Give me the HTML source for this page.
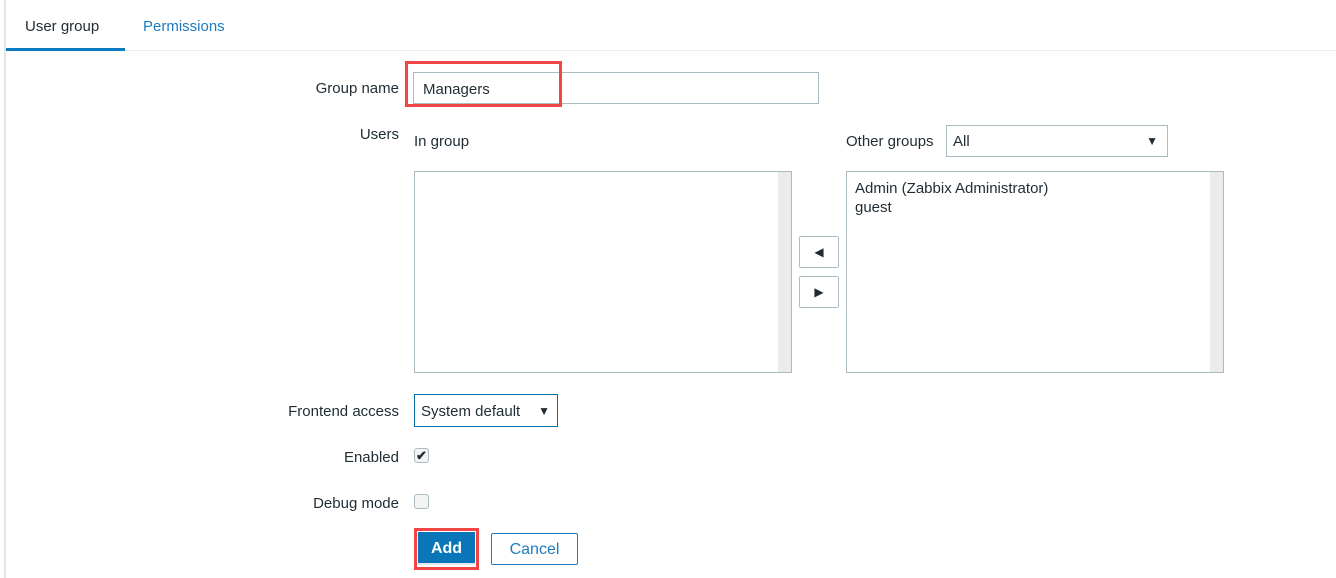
<!DOCTYPE html>
<html><head><style>
body{margin:0;width:1336px;height:578px;background:#fff;font-family:"Liberation Sans",Arial,sans-serif;font-size:15px;color:#1f2c33;position:relative;overflow:hidden}
.a{position:absolute}
.lbl{position:absolute;right:937px;text-align:right;white-space:nowrap}
.box{position:absolute;border:1px solid #acbbc2;background:#fff;box-sizing:border-box}
.sb{position:absolute;top:0;right:0;width:13px;bottom:0;background:#ebebeb}
.btn{position:absolute;border:1px solid #acbbc2;border-radius:2px;background:#fff;box-sizing:border-box;font-size:12px;text-align:center;line-height:30px}
.cb{position:absolute;width:15px;height:15px;border:1px solid #acbbc2;border-radius:3px;background:#f4f4f4;box-sizing:border-box}
</style></head><body>
<div class="a" style="left:4px;top:0;width:2px;height:578px;background:#e4e4e4"></div>
<div class="a" style="left:6px;top:50px;width:1330px;height:1px;background:#ebeef0"></div>
<div class="a" style="left:6px;top:48px;width:119px;height:3px;background:#0a7bc1"></div>
<div class="a" style="left:25px;top:18px">User group</div>
<div class="a" style="left:143px;top:18px;color:#1f7bbf">Permissions</div>

<div class="lbl" style="top:80px">Group name</div>
<div class="box" style="left:413px;top:72px;width:406px;height:32px;padding:8px 9px">Managers</div>
<div class="a" style="left:405px;top:61px;width:157px;height:46px;border:3px solid #f24545;box-sizing:border-box"></div>

<div class="lbl" style="top:126px">Users</div>
<div class="a" style="left:414px;top:133px">In group</div>
<div class="a" style="left:846px;top:133px">Other groups</div>
<div class="box" style="left:946px;top:125px;width:222px;height:32px;padding:7px 6px">All<span class="a" style="right:9px;top:8px;font-size:12px">▼</span></div>

<div class="box" style="left:414px;top:171px;width:378px;height:202px"><div class="sb"></div></div>
<div class="box" style="left:846px;top:171px;width:378px;height:202px;padding:7px 8px;line-height:19px">Admin (Zabbix Administrator)<br>guest<div class="sb"></div></div>

<div class="btn" style="left:799px;top:236px;width:40px;height:32px">◀</div>
<div class="btn" style="left:799px;top:276px;width:40px;height:32px">▶</div>

<div class="lbl" style="top:403px">Frontend access</div>
<div class="box" style="left:414px;top:394px;width:144px;height:33px;border-color:#0a6fa8;padding:8px 6px">System default<span class="a" style="right:7px;top:9px;font-size:12px">▼</span></div>

<div class="lbl" style="top:449px">Enabled</div>
<div class="cb" style="left:414px;top:448px;font-size:13px;line-height:13px;text-align:center;font-weight:bold">✔</div>
<div class="lbl" style="top:495px">Debug mode</div>
<div class="cb" style="left:414px;top:494px"></div>

<div class="a" style="left:414px;top:528px;width:65px;height:42px;border:3px solid #f24545;box-sizing:border-box"></div>
<div class="a" style="left:418px;top:532px;width:57px;height:33px;background:#0a76b7;color:#fff;font-weight:bold;font-size:16px;text-align:center;line-height:33px;border-bottom:2px solid #e0e8ee;box-sizing:border-box">Add</div>
<div class="a" style="left:491px;top:533px;width:87px;height:32px;border:1px solid #1f7bbf;border-radius:2px;box-sizing:border-box;color:#1f7bbf;font-size:16px;text-align:center;line-height:31px">Cancel</div>
</body></html>
